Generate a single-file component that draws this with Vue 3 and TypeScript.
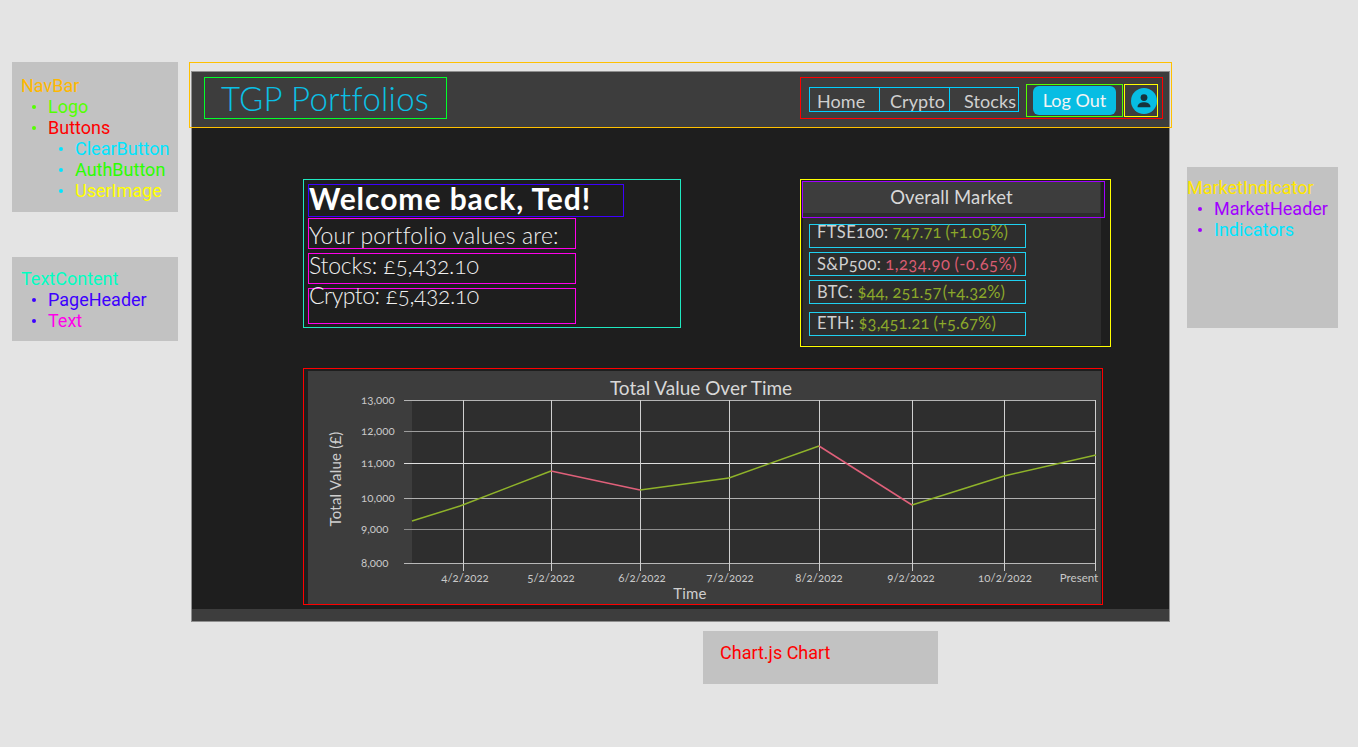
<script setup lang="ts">
interface Pt { x: number; y: number }
interface Row { label: string; value: string; change: string; tone: string }

const gridY: { y: number; c: string }[] = [
  { y: 400.5, c: '#b4b4b4' }, { y: 431.5, c: '#9c9c9c' }, { y: 463.5, c: '#dedede' },
  { y: 498.5, c: '#b0b0b0' }, { y: 529.5, c: '#8e8e8e' }, { y: 563.5, c: '#b8b8b8' }
]
const yLabels: string[] = ['13,000', '12,000', '11,000', '10,000', '9,000', '8,000']
const gridX: number[] = [463.5, 551.5, 640.5, 729.5, 819.5, 912.5, 1004.5, 1095.5]
const xLabels: { t: string; x: number }[] = [
  { t: '4/2/2022', x: 465 }, { t: '5/2/2022', x: 551 }, { t: '6/2/2022', x: 642 },
  { t: '7/2/2022', x: 730 }, { t: '8/2/2022', x: 819 }, { t: '9/2/2022', x: 911 },
  { t: '10/2/2022', x: 1005 }, { t: 'Present', x: 1079 }
]
const pts: Pt[] = [
  { x: 412, y: 521 }, { x: 460, y: 506 }, { x: 551, y: 471 }, { x: 640, y: 490 },
  { x: 729, y: 478 }, { x: 819, y: 446 }, { x: 912, y: 505 }, { x: 1004, y: 476 }, { x: 1096, y: 455 }
]
const segs = pts.slice(1).map((p, i) => ({ a: pts[i], b: p, up: p.y < pts[i].y }))

const rows: Row[] = [
  { label: 'FTSE100:', value: '747.71', change: '(+1.05%)', tone: 'up' },
  { label: 'S&P500:', value: '1,234.90', change: '(-0.65%)', tone: 'down' },
  { label: 'BTC:', value: '$44, 251.57', change: '(+4.32%)', tone: 'up' },
  { label: 'ETH:', value: '$3,451.21', change: '(+5.67%)', tone: 'up' }
]
</script>

<template>
  <div class="page">
    <aside class="note note-nav">
      <p class="c-nav">NavBar</p>
      <ul class="lv1 dot-lime">
        <li class="c-logo">Logo</li>
        <li class="c-red">Buttons</li>
      </ul>
      <ul class="lv2 dot-cyan">
        <li class="c-cyan">ClearButton</li>
        <li class="c-auth">AuthButton</li>
        <li class="c-yellow">UserImage</li>
      </ul>
    </aside>

    <aside class="note note-text">
      <p class="c-teal">TextContent</p>
      <ul class="lv1 dot-blue">
        <li class="c-blue">PageHeader</li>
        <li class="c-pink">Text</li>
      </ul>
    </aside>

    <aside class="note note-market">
      <p class="c-gold">MarketIndicator</p>
      <ul class="lv1 dot-purple">
        <li class="c-purple">MarketHeader</li>
        <li class="c-cyan">Indicators</li>
      </ul>
    </aside>

    <aside class="note note-chart"><p class="c-red">Chart.js Chart</p></aside>

    <div class="frame">
      <header class="nav">
        <div class="logo">TGP Portfolios</div>
        <div class="buttons">
          <a class="clear">Home</a>
          <a class="clear">Crypto</a>
          <a class="clear">Stocks</a>
          <div class="auth"><button class="logout">Log Out</button></div>
          <div class="user">
            <svg width="26" height="26" viewBox="0 0 26 26">
              <circle cx="13" cy="13" r="13" fill="#07bde3" />
              <circle cx="13" cy="9.6" r="3.4" fill="#16323c" />
              <path d="M6.6 18.6c0-3 3.4-4.4 6.4-4.4s6.4 1.4 6.4 4.4v.6H6.6z" fill="#16323c" />
            </svg>
          </div>
        </div>
      </header>

      <main class="main">
        <section class="text-content">
          <h1 class="page-header">Welcome back, Ted!</h1>
          <p class="txt t1">Your portfolio values are:</p>
          <p class="txt t2">Stocks: £5,432.10</p>
          <p class="txt t3">Crypto: £5,432.10</p>
        </section>

        <section class="market">
          <div class="market-panel">
            <div class="market-header"><span>Overall Market</span></div>
            <div v-for="r in rows" :key="r.label" class="indicator">
              <span class="lbl">{{ r.label }}</span>
              <span :class="r.tone">{{ r.value }}</span>
              <span :class="r.tone">{{ r.change }}</span>
            </div>
          </div>
        </section>

        <section class="chart">
          <svg class="chart-svg" width="798" height="235" viewBox="304 369 798 235">
            <rect x="308" y="371" width="793" height="233" fill="#3d3d3d" />
            <rect x="412" y="400" width="684" height="163" fill="#2e2e2e" />
            <line v-for="g in gridY" :key="g.y" x1="404" x2="1096" :y1="g.y" :y2="g.y" :stroke="g.c" stroke-width="1" />
            <line v-for="x in gridX" :key="x" :x1="x" :x2="x" y1="400" y2="571" stroke="#cfcfcf" stroke-width="1" />
            <line v-for="s in segs" :key="s.a.x" :x1="s.a.x" :y1="s.a.y" :x2="s.b.x" :y2="s.b.y"
              :stroke="s.up ? '#8fb32a' : '#e0607a'" stroke-width="1.5" />
            <text x="701" y="395" class="c-title" text-anchor="middle">Total Value Over Time</text>
            <text v-for="(t, i) in yLabels" :key="t" x="361" :y="gridY[i].y + 3.5" class="c-tick">{{ t }}</text>
            <text v-for="l in xLabels" :key="l.t" :x="l.x" y="582" text-anchor="middle" class="c-tick">{{ l.t }}</text>
            <text x="690" y="599" class="c-axis" text-anchor="middle">Time</text>
            <text transform="translate(341 479) rotate(-90)" class="c-axis" text-anchor="middle">Total Value (£)</text>
          </svg>
        </section>
      </main>

      <footer class="foot"></footer>
    </div>

    <div class="nav-outline"></div>
  </div>
</template>

<style scoped>
.page {
  position: relative;
  width: 1358px;
  height: 747px;
  overflow: hidden;
  background: #e4e4e4;
  font-family: "Lato", "Open Sans", sans-serif;
  font-variant-numeric: oldstyle-nums;
}

/* annotation sheets placed on the free canvas */
.note {
  position: absolute;
  box-sizing: border-box;
  background: #c2c2c2;
  font: 400 18px/21px "Roboto", sans-serif;
}
.note p { margin: 0; }
.note ul { margin: 0; padding: 0; list-style: none; }
.note li { position: relative; }
.note li::before {
  content: "";
  position: absolute;
  top: 9px;
  width: 4px;
  height: 4px;
  border-radius: 50%;
  background: var(--dot);
}
.note-nav { left: 12px; top: 62px; width: 166px; height: 150px; padding: 13px 0 0 9px; }
.note-text { left: 12px; top: 257px; width: 166px; height: 84px; padding: 11px 0 0 9px; }
.note-market { left: 1187px; top: 167px; width: 151px; height: 161px; padding: 10px 0 0 0; white-space: nowrap; }
.note-chart { left: 703px; top: 631px; width: 235px; height: 53px; padding: 11px 0 0 17px; }
.lv1 { padding-left: 27px !important; }
.lv1 li::before { left: -16px; }
.lv2 { padding-left: 54px !important; }
.lv2 li::before { left: -16px; }
.dot-lime { --dot: #54ff00; }
.dot-cyan { --dot: #00e5ff; }
.dot-blue { --dot: #3d00ff; }
.dot-purple { --dot: #a100ff; }
.c-nav { color: #ffb800; }
.c-logo { color: #54ff00; }
.c-red { color: #ff0000; }
.c-cyan { color: #00e5ff; }
.c-auth { color: #2bff00; }
.c-yellow { color: #ffff00; }
.c-teal { color: #00ffc2; }
.c-blue { color: #3d00ff; }
.c-pink { color: #ff00ea; }
.c-gold { color: #ffe600; }
.c-purple { color: #a100ff; }

/* mock-up window */
.frame {
  position: absolute;
  left: 191px;
  top: 71px;
  box-sizing: border-box;
  width: 979px;
  height: 551px;
  border: 1px solid #8f8f8f;
  background: #1e1e1e;
  display: flex;
  flex-direction: column;
}
.nav-outline {
  position: absolute;
  left: 189px;
  top: 62px;
  box-sizing: border-box;
  width: 983px;
  height: 66px;
  border: 1px solid #ffc000;
  pointer-events: none;
}
.nav {
  height: 55px;
  flex: none;
  box-sizing: border-box;
  background: #3d3d3d;
  display: flex;
  justify-content: space-between;
  align-items: flex-start;
  padding: 5px 6px 0 12px;
}
.logo {
  box-sizing: border-box;
  width: 243px;
  height: 42px;
  border: 1px solid #00ff2a;
  padding-left: 16px;
  font-size: 33px;
  font-weight: 300;
  line-height: 40px;
  letter-spacing: 0.25px;
  color: #0ac0e6;
  white-space: nowrap;
}
.buttons {
  box-sizing: border-box;
  width: 363px;
  height: 42px;
  border: 1px solid #ff0000;
  display: flex;
  align-items: flex-start;
  padding-left: 8px;
}
.clear {
  box-sizing: border-box;
  width: 70px;
  height: 25px;
  margin-top: 9px;
  border: 1px solid #00cfff;
  margin-right: -1px;
  font-size: 18px;
  line-height: 26px;
  font-weight: 400;
  letter-spacing: 0.1px;
  color: #d0d0d0;
  white-space: nowrap;
  padding-left: 7px;
}
.clear:nth-child(1) { width: 71px; }
.clear:nth-child(2) { padding-left: 10px; width: 71px; }
.clear:nth-child(3) { padding-left: 14px; width: 70px; margin-right: 0; }
.auth {
  box-sizing: border-box;
  width: 97px;
  height: 33px;
  margin: 6px 0 0 7px;
  border: 1px solid #54ff00;
  padding: 1px 0 0 6px;
}
.logout {
  display: block;
  width: 83px;
  height: 29px;
  padding: 0 0 2px;
  border: 0;
  border-radius: 6px;
  background: #07bde3;
  color: #f4f4f4;
  font: 400 18px "Lato", sans-serif;
  letter-spacing: 0;
}
.user {
  box-sizing: border-box;
  width: 34px;
  height: 33px;
  margin: 6px 0 0 1px;
  border: 1px solid #ffff00;
  padding: 3px 0 0 6px;
}
.user svg { display: block; }

.main {
  flex: 1;
  min-height: 0;
  display: grid;
  grid-template-columns: 378px 311px;
  grid-template-rows: 168px 237px;
  column-gap: 119px;
  row-gap: 21px;
  align-content: start;
  padding: 52px 0 0 111px;
}
.text-content {
  box-sizing: border-box;
  height: 149px;
  border: 1px solid #1fe8c0;
  padding: 4px 4px 0;
  color: #f0f0f0;
}
.page-header {
  box-sizing: border-box;
  width: 316px;
  height: 33px;
  margin: 0 0 1px;
  border: 1px solid #3d00ff;
  font-size: 30px;
  font-weight: 700;
  line-height: 27px;
  letter-spacing: 0.95px;
  color: #ffffff;
  white-space: nowrap;
}
.txt {
  box-sizing: border-box;
  width: 268px;
  margin: 0;
  border: 1px solid #ff00ea;
  font-size: 23px;
  font-weight: 300;
  white-space: nowrap;
}
.t1 { height: 31px; line-height: 32px; margin-bottom: 4px; letter-spacing: 0.17px; }
.t2 { height: 31px; line-height: 22px; margin-bottom: 4px; letter-spacing: -0.2px; }
.t3 { height: 36px; line-height: 11px; padding-top: 1px; letter-spacing: -0.45px; }

.market {
  box-sizing: border-box;
  height: 168px;
  border: 1px solid #ffff00;
  padding: 2px 9px 1px 2px;
}
.market-panel {
  height: 100%;
  background: #2d2d2d;
  display: flex;
  flex-direction: column;
}
.market-header {
  box-sizing: border-box;
  flex: none;
  height: 37px;
  margin: -1px -4px 6px -1px;
  border: 1px solid #a100ff;
  padding-right: 4px;
}
.market-header span {
  display: block;
  height: 31px;
  background: #3d3d3d;
  text-align: center;
  font-size: 18.5px;
  line-height: 30px;
  font-weight: 400;
  letter-spacing: 0.1px;
  color: #d8d8d8;
}
.indicator {
  box-sizing: border-box;
  flex: none;
  width: 217px;
  height: 24px;
  margin: 0 0 4px 6px;
  border: 1px solid #1fd0f0;
  padding-left: 7px;
  font-size: 16.5px;
  line-height: 22px;
  font-weight: 400;
  letter-spacing: 0.1px;
  white-space: nowrap;
  display: flex;
  gap: 4px;
}
.indicator:nth-child(2) { line-height: 14px; }
.indicator:nth-child(3) { letter-spacing: 0.5px; }
.indicator:nth-child(4) .up:last-child { margin-left: -3px; }
.indicator:nth-child(5) { margin-top: 4px; line-height: 20px; }
.lbl { color: #d0d0d0; letter-spacing: 0.4px; }
.up { color: #8ba82a; }
.down { color: #d95c72; }

.chart {
  grid-column: 1 / span 2;
  box-sizing: border-box;
  width: 800px;
  height: 237px;
  border: 1px solid #ff0000;
}
.chart-svg { display: block; overflow: visible; background: #1e1e1e; }
.c-title { font: 400 19px "Lato", sans-serif; letter-spacing: 0; fill: #d8d8d8; }
.c-tick { font: 400 11.5px "Lato", sans-serif; font-variant-numeric: oldstyle-nums; letter-spacing: 0; fill: #c8c8c8; }
.c-axis { font: 400 15px "Lato", sans-serif; letter-spacing: 0.2px; fill: #cfcfcf; }

.foot { height: 12px; flex: none; background: #3d3d3d; }
</style>

<style>
html, body { margin: 0; padding: 0; background: #e4e4e4; overflow: hidden; }
</style>
